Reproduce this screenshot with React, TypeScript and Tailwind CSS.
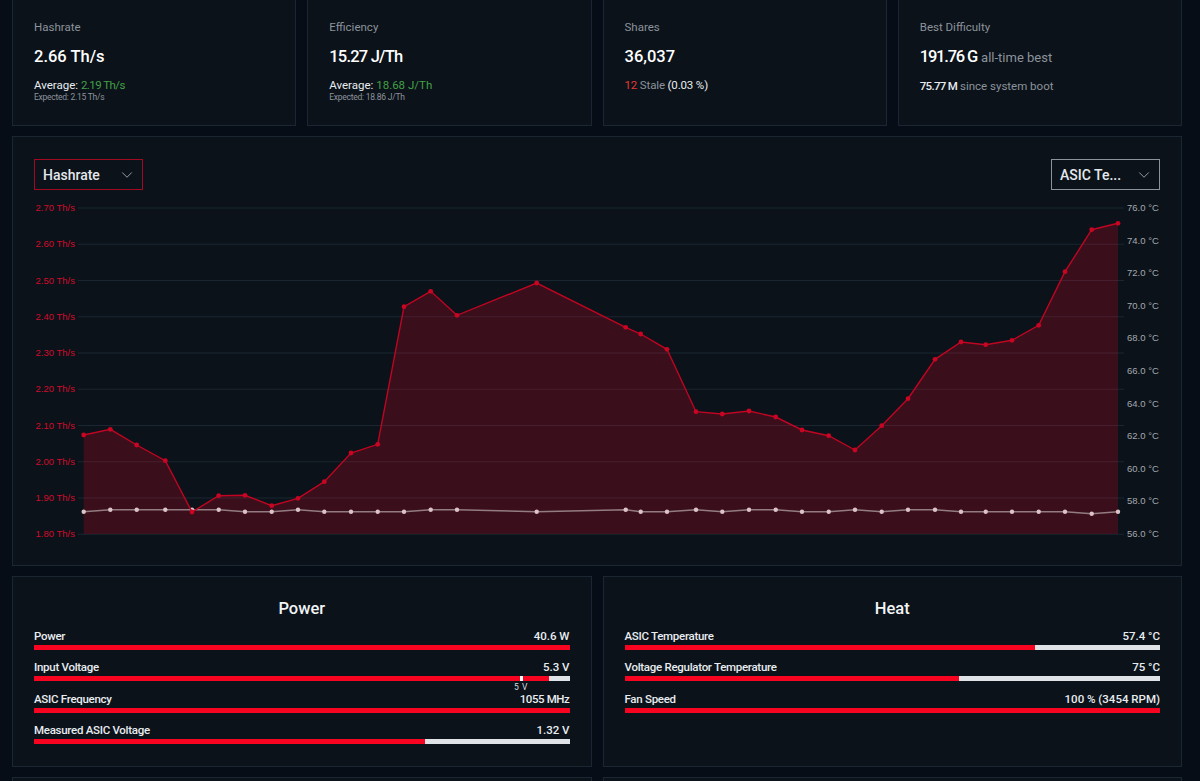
import { ChevronDown } from "lucide-react";

const hashrate = [
  [83.7, 435], [110.3, 429.3], [136.7, 445], [165.3, 460.7], [192, 512], [218.7, 495.7], [245, 495.3],
  [271.7, 505.7], [298, 498.3], [324.3, 481.7], [351, 453], [377.7, 444.3], [404, 306.7], [430.7, 291.3],
  [457, 315.3], [536.7, 283], [625.7, 327.3], [640.7, 334], [667, 349.3], [696, 411.7], [722.3, 414],
  [749, 411], [775.7, 417], [802, 430], [828.7, 435.7], [855, 450], [881.7, 425.7], [908, 398.7],
  [935, 359.3], [961, 342], [985.7, 344.7], [1012, 340.3], [1038.7, 325.3], [1065, 271.7], [1091.7, 229.7],
  [1118, 223.3],
];

const temps = [
  511.7, 509.7, 509.7, 509.7, 509.7, 509.7, 511.7, 511.7, 509.7, 511.7, 511.7, 511.7, 511.7, 509.7, 509.7,
  511.7, 509.7, 511.7, 511.7, 509.7, 511.7, 509.7, 509.7, 511.7, 511.7, 509.7, 511.7, 509.7, 509.7, 511.7,
  511.7, 511.7, 511.7, 511.7, 513.7, 511.7,
];

const leftLabels = ["2.70", "2.60", "2.50", "2.40", "2.30", "2.20", "2.10", "2.00", "1.90", "1.80"];
const rightLabels = ["76.0", "74.0", "72.0", "70.0", "68.0", "66.0", "64.0", "62.0", "60.0", "58.0", "56.0"];

const toLine = (pts: number[][]) => pts.map((p) => p.join(",")).join(" ");

const Card = ({ className = "", children }: { className?: string; children?: React.ReactNode }) => (
  <div className={`border border-[#1a2632] bg-[#0b1219] ${className}`}>{children}</div>
);

const Stat = ({ title, children }: { title: string; children: React.ReactNode }) => (
  <Card className="h-[130px] px-[21px] pt-[21px]">
    <div className="mb-[9px] text-[11.5px] leading-[18px] text-[#8b939b]">{title}</div>
    {children}
  </Card>
);

const Select = ({ label, className }: { label: string; className: string }) => (
  <div className={`flex h-[31px] w-[109px] items-center justify-between border pl-[8px] pr-[4px] ${className}`}>
    <span className="pt-px text-[14px] font-medium text-[#e4e8ec]">{label}</span>
    <ChevronDown size={18} strokeWidth={1} className="mr-[2px] text-[#c4cad0]" />
  </div>
);

const Bar = ({ label, value, pct, mark, tight }: { label: string; value: string; pct: number; mark?: boolean; tight?: boolean }) => (
  <div className="relative mb-[10.3px]">
    <div className="mb-[2px] flex justify-between text-[11.5px] font-medium leading-[14px] text-[#e8ecf0]">
      <span className="tracking-[-0.28px]">{label}</span>
      <span className={tight ? "tracking-[-0.4px]" : ""}>{value}</span>
    </div>
    <div className="relative h-[5px] bg-[#dfe3e8]">
      <div className="h-full bg-[#f80421]" style={{ width: `${pct}%` }} />
      {mark && <div className="absolute left-[486px] top-0 h-full w-[3px] bg-white" />}
    </div>
    {mark && (
      <span className="absolute left-[480px] top-[22px] text-[8.5px] leading-[10px] tracking-[0.5px] text-[#d8dce0]">
        5 V
      </span>
    )}
  </div>
);

const Panel = ({ title, children }: { title: string; children: React.ReactNode }) => (
  <Card className="h-[191px] px-[21px] pt-[22px]">
    <h2 className="mb-[10px] text-center text-[16.5px] font-medium leading-[20px] text-[#f2f4f6]">{title}</h2>
    {children}
  </Card>
);

export default function App() {
  return (
    <div
      className="h-[781px] overflow-hidden bg-[#070d17] pl-[12px]"
      style={{ fontFamily: "Roboto, sans-serif" }}
    >
      <div className="-mt-[4px] flex w-[1170px] flex-col gap-[10px]">
        <div className="grid grid-cols-4 gap-x-[11px]">
          <Stat title="Hashrate">
            <div className="mb-[8px] text-[16.5px] font-medium leading-[24px] text-white">2.66 Th/s</div>
            <div className="text-[11.5px] leading-[16px] text-[#e8ecf0]">
              Average: <span className="tracking-[-0.55px] text-[#43a047]">2.19 Th/s</span>
            </div>
            <div className="-mt-px text-[8.5px] leading-[10px] tracking-[-0.25px] text-[#8b939b]">Expected: 2.15 Th/s</div>
          </Stat>
          <Stat title="Efficiency">
            <div className="mb-[8px] text-[16.5px] font-medium leading-[24px] tracking-[-0.8px] text-white">15.27 J/Th</div>
            <div className="text-[11.5px] leading-[16px] text-[#e8ecf0]">
              Average: <span className="text-[#43a047]">18.68 J/Th</span>
            </div>
            <div className="-mt-px text-[8.5px] leading-[10px] tracking-[-0.25px] text-[#8b939b]">Expected: 18.86 J/Th</div>
          </Stat>
          <Stat title="Shares">
            <div className="mb-[8px] text-[16.5px] font-medium leading-[24px] text-white">36,037</div>
            <div className="text-[11.5px] leading-[16px] tracking-[-0.15px] text-[#8b939b]">
              <span className="text-[#e53935]">12</span> Stale <span className="text-[#e8ecf0]">(0.03 %)</span>
            </div>
          </Stat>
          <Stat title="Best Difficulty">
            <div className="mb-[8px] text-[16.5px] font-medium leading-[24px] text-white">
              <span className="tracking-[-1.2px]">191.76 G</span>{" "}
              <span className="text-[13px] font-normal text-[#8b939b]">all-time best</span>
            </div>
            <div className="text-[11.5px] leading-[16px] text-[#8b939b]">
              <span className="font-medium tracking-[-0.7px] text-[#e8ecf0]">75.77 M</span> since system boot
            </div>
          </Stat>
        </div>

        <Card className="h-[430px] px-[21px] pt-[22px]">
          <div className="mb-[8px] flex justify-between">
            <Select label="Hashrate" className="border-[#a10a20]" />
            <Select label="ASIC Te..." className="border-[#8a929c]" />
          </div>
          <svg width={1126} height={350} viewBox="34 198 1126 350" className="block" fontFamily="Liberation Sans, sans-serif" fontSize={9.5}>
            {leftLabels.map((v, i) => {
              const y = 208 + i * 36.25;
              return (
                <g key={v}>
                  <line x1={78} x2={1124} y1={y} y2={y} stroke="#1a2632" />
                  <text x={75} y={y + 3} textAnchor="end" fill="#d00c2c">
                    {v} Th/s
                  </text>
                </g>
              );
            })}
            {rightLabels.map((v, i) => (
              <text key={v} x={1127} y={211 + i * 32.6} fill="#a4a9b0">
                {v} °C
              </text>
            ))}
            <polygon points={`83.7,534 ${toLine(hashrate)} 1118,534`} fill="#f80421" fillOpacity={0.2} />
            <polyline points={toLine(hashrate.map((p, i) => [p[0], temps[i]]))} fill="none" stroke="#fff" strokeOpacity={0.45} strokeWidth={1.5} />
            {hashrate.map((p, i) => (
              <circle key={i} cx={p[0]} cy={temps[i]} r={2.2} fill="#dcc3c8" />
            ))}
            <polyline points={toLine(hashrate)} fill="none" stroke="#c00522" strokeWidth={1.4} />
            {hashrate.map((p, i) => (
              <circle key={i} cx={p[0]} cy={p[1]} r={2.4} fill="#c80522" />
            ))}
          </svg>
        </Card>

        <div className="grid grid-cols-2 gap-x-[11px]">
          <Panel title="Power">
            <Bar label="Power" value="40.6 W" pct={100} />
            <Bar label="Input Voltage" value="5.3 V" pct={96.2} mark />
            <Bar label="ASIC Frequency" value="1055 MHz" pct={100} tight />
            <Bar label="Measured ASIC Voltage" value="1.32 V" pct={73.1} />
          </Panel>
          <Panel title="Heat">
            <Bar label="ASIC Temperature" value="57.4 °C" pct={76.6} />
            <Bar label="Voltage Regulator Temperature" value="75 °C" pct={62.4} />
            <Bar label="Fan Speed" value="100 % (3454 RPM)" pct={100} />
          </Panel>
        </div>

        <div className="grid grid-cols-2 gap-x-[11px]">
          <Card className="h-[100px]" />
          <Card className="h-[100px]" />
        </div>
      </div>
    </div>
  );
}
